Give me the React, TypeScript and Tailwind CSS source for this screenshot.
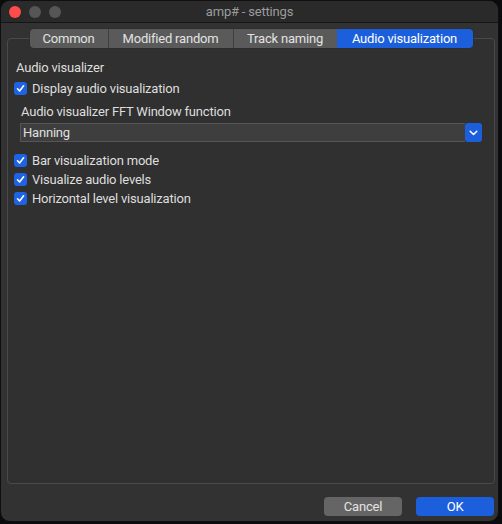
import React from "react";

function Check({ label }: { label: string }) {
  return (
    <div className="flex items-center h-[19px] pl-[6px]">
      <span className="w-[13px] h-[13px] rounded-[3px] bg-[#1d63e3] flex items-center justify-center shrink-0">
        <svg width="9" height="9" viewBox="0 0 9 9">
          <path d="M1.5 4.8 L3.6 7 L7.6 1.8" stroke="white" strokeWidth="1.6" fill="none" strokeLinecap="round" strokeLinejoin="round" />
        </svg>
      </span>
      <span className="ml-[5px] text-[13px] text-[#dedede]">{label}</span>
    </div>
  );
}

export default function App() {
  const tabs = [
    { t: "Common", w: "w-[78px]" },
    { t: "Modified random", w: "w-[125px]" },
    { t: "Track naming", w: "w-[104px]" },
  ];
  return (
    <div className="w-[502px] h-[524px] bg-[#0b0b0d] tracking-[-0.2px]" style={{ fontFamily: "Roboto, 'Liberation Sans', sans-serif" }}>
      <div className="w-[499px] h-[522px] rounded-[10px] overflow-hidden border border-[#0f0f0f] bg-[#323232] flex flex-col">
        {/* title bar */}
        <div className="h-[22px] bg-[#2a2a2a] border-b border-[#151515] relative flex items-center justify-center shrink-0">
          <div className="absolute left-[8px] top-[5px] flex gap-[8px]">
            <span className="w-[12px] h-[12px] rounded-full bg-[#fd4c4a]" />
            <span className="w-[12px] h-[12px] rounded-full bg-[#565656]" />
            <span className="w-[12px] h-[12px] rounded-full bg-[#565656]" />
          </div>
          <span className="text-[13px] text-[#9c9c9c]">amp# - settings</span>
        </div>
        {/* body */}
        <div className="flex-1 flex flex-col pl-[6px] pr-[3px] pt-[6px]">
          <div className="flex justify-center relative z-10 -mb-[10px] h-[19px]">
            <div className="flex rounded-[4px] overflow-hidden h-[19px] shadow-[0_0_0_0.5px_#2a2a2a]">
              {tabs.map((x, i) => (
                <div
                  key={x.t}
                  className={`${x.w} bg-[#5a5a5a] text-[#e2e2e2] text-[13px] flex items-center justify-center ${i > 0 ? "border-l border-[#3e3e3e]" : ""}`}
                >
                  {x.t}
                </div>
              ))}
              <div className="w-[136px] bg-[#1c5fdc] text-white text-[13px] flex items-center justify-center">
                Audio visualization
              </div>
            </div>
          </div>
          <div className="w-[488px] h-[446px] rounded-[4px] border border-[#4a4a4a] bg-[#303030] pt-[19px] flex flex-col">
            <div className="h-[19px] flex items-center pl-[8px] text-[13px] text-[#dedede]">Audio visualizer</div>
            <div className="mt-[2px]">
              <Check label="Display audio visualization" />
            </div>
            <div className="mt-[4px] h-[19px] flex items-center pl-[13px] text-[13px] text-[#dedede]">
              Audio visualizer FFT Window function
            </div>
            <div className="mt-[2px] ml-[12px] w-[462px] h-[19px] flex">
              <div className="flex-1 bg-[#3e3e3e] border border-[#555555] border-r-0 flex items-center pl-[2px] text-[13px] text-[#e0e0e0]">
                Hanning
              </div>
              <div className="w-[17px] h-[19px] rounded-[3px] bg-[#1c5fdc] flex items-center justify-center">
                <svg width="9" height="6" viewBox="0 0 9 6">
                  <path d="M1.2 1.3 L4.5 4.5 L7.8 1.3" stroke="white" strokeWidth="1.5" fill="none" strokeLinecap="round" strokeLinejoin="round" />
                </svg>
              </div>
            </div>
            <div className="mt-[9px] flex flex-col">
              <Check label="Bar visualization mode" />
              <Check label="Visualize audio levels" />
              <Check label="Horizontal level visualization" />
            </div>
          </div>
          <div className="flex justify-end gap-[14px] mt-[13px] pr-[1px]">
            <button className="w-[78px] h-[19px] rounded-[4px] bg-[#656565] text-[13px] text-[#e4e4e4] flex items-center justify-center">
              Cancel
            </button>
            <button className="w-[78px] h-[19px] rounded-[4px] bg-[#1c5fdc] text-[13px] text-white flex items-center justify-center">
              OK
            </button>
          </div>
        </div>
      </div>
    </div>
  );
}
